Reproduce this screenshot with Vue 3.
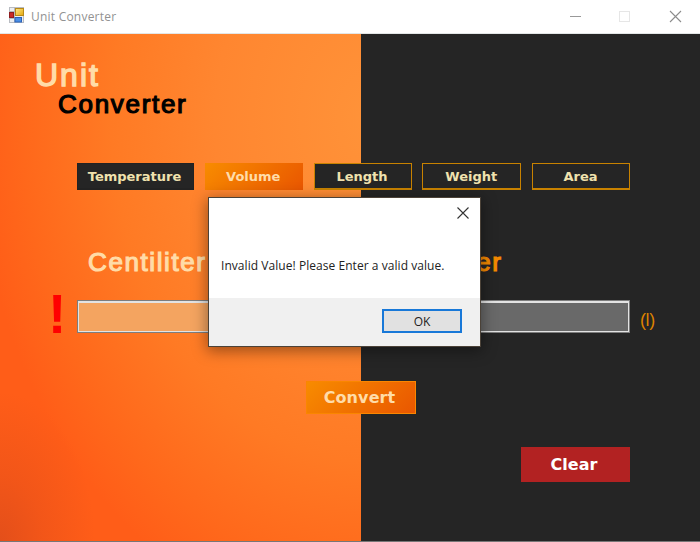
<script setup>
import { ref } from 'vue'

const tabs = ['Temperature', 'Volume', 'Length', 'Weight', 'Area']
const active = ref('Volume')
const from = ref('')
const to = ref('')
const invalid = ref(true)
const dialogOpen = ref(true)

function convert() {
  const value = parseFloat(from.value)
  invalid.value = Number.isNaN(value)
  dialogOpen.value = invalid.value
  if (!invalid.value) to.value = String(value / 100)
}

function clear() {
  from.value = ''
  to.value = ''
  invalid.value = false
}
</script>

<template>
  <div class="window">
    <header class="titlebar">
      <svg class="app-icon" width="16" height="17" viewBox="0 0 16 17">
        <defs>
          <linearGradient id="gold" x1="0" y1="0" x2="1" y2="1">
            <stop offset="0" stop-color="#ffe98a" />
            <stop offset="1" stop-color="#e3a70c" />
          </linearGradient>
        </defs>
        <rect x="0.500" y="0.500" width="14" height="15" fill="#eceef1" stroke="#b9bcc2" />
        <path d="M0.500 4.500H5M5.500 0.500V16M0.500 11.500H6" stroke="#b4b7be" fill="none" />
        <rect x="6.500" y="1.500" width="8" height="7" fill="url(#gold)" stroke="#b98a17" />
        <rect x="0.500" y="5.500" width="4" height="5" fill="#c92a27" stroke="#8f1d1f" />
        <rect x="6" y="10.500" width="6.500" height="4.500" fill="#4a8fe6" stroke="#2c62b8" />
      </svg>
      <span class="caption">Unit Converter</span>
      <svg class="controls" width="114" height="14" viewBox="0 0 114 14">
        <path d="M1 7.500H12" stroke="#999" />
        <rect x="50.500" y="2.500" width="10" height="10" fill="none" stroke="#e6e6e6" />
        <path d="M101 2L112 13M112 2L101 13" stroke="#8c8c8c" stroke-width="1.100" />
      </svg>
    </header>

    <main class="form">
      <h1 class="brand">
        <span class="brand-unit">Unit</span>
        <span class="brand-converter">Converter</span>
      </h1>

      <nav class="tabs">
        <button
          v-for="tab in tabs"
          :key="tab"
          class="tab"
          :class="{ active: tab === active, first: tab === 'Temperature' }"
          @click="active = tab"
        >{{ tab }}</button>
      </nav>

      <div class="labels">
        <span class="label-from">Centiliter</span>
        <span class="label-to">Liter</span>
      </div>

      <div class="fields">
        <span class="warning"><span v-if="invalid">!</span></span>
        <input v-model="from" class="field field-from" />
        <input v-model="to" class="field field-to" readonly />
        <span class="symbol">(l)</span>
      </div>

      <button class="convert" @click="convert">Convert</button>
      <button class="clear" @click="clear">Clear</button>
    </main>

    <section v-if="dialogOpen" class="dialog">
      <div class="dialog-body">
        <svg class="dialog-close" width="12" height="12" viewBox="0 0 12 12" @click="dialogOpen = false">
          <path d="M0.500 0.500L11.500 11.500M11.500 0.500L0.500 11.500" stroke="#333" stroke-width="1.100" />
        </svg>
        <p class="message">Invalid Value! Please Enter a valid value.</p>
      </div>
      <footer class="dialog-footer">
        <button class="ok" @click="dialogOpen = false">OK</button>
      </footer>
    </section>
  </div>
</template>

<style>
body {
  margin: 0;
  overflow: hidden;
}
</style>

<style scoped>
.window {
  position: relative;
  box-sizing: border-box;
  width: 700px;
  height: 542px;
  display: flex;
  flex-direction: column;
  background: #fff;
  overflow: hidden;
}
button,
input {
  box-sizing: border-box;
  margin: 0;
  padding: 0;
  border-radius: 0;
  outline: none;
}
.titlebar {
  box-sizing: border-box;
  height: 34px;
  flex: none;
  display: flex;
  align-items: center;
  padding: 0 17px 2px 9px;
  border-bottom: 1px solid #e3e6e6;
}
.app-icon {
  flex: none;
}
.caption {
  margin-left: 6px;
  padding-top: 2px;
  font: 12px/16px "Open Sans", sans-serif;
  letter-spacing: 0.22px;
  color: #929292;
}
.controls {
  margin-left: auto;
}
.form {
  box-sizing: border-box;
  height: 508px;
  display: flex;
  flex-direction: column;
  padding: 24px 0 0;
  border-bottom: 1px solid #777;
  background:
    linear-gradient(#252525, #252525) 361px 0 / 339px 100% no-repeat,
    radial-gradient(ellipse 95px 150px at 0 508px, rgba(226, 78, 26, 0.95), rgba(234, 81, 25, 0.6) 45%, rgba(250, 90, 24, 0) 100%),
    radial-gradient(ellipse 400px 520px at 375px 85px, #ff9339 0, #ff8630 40%, #ff7a24 66%, #ff681b 88%, #ff5d18 100%);
}
.brand {
  display: flex;
  flex-direction: column;
  height: 105px;
  margin: 0;
  font-family: "Liberation Sans", sans-serif;
  font-weight: 400;
}
.brand-unit {
  margin-left: 35px;
  height: 34px;
  font-size: 32px;
  line-height: 34px;
  letter-spacing: 2px;
  color: #ffdca8;
  -webkit-text-stroke: 1.4px #ffdca8;
}
.brand-converter {
  margin-left: 58px;
  font-size: 26px;
  line-height: 24px;
  letter-spacing: 1.7px;
  color: #000;
  -webkit-text-stroke: 1.2px #000;
}
.tabs {
  display: grid;
  grid-template-columns: 117px 98px 98px 99px 98px;
  column-gap: 10.75px;
  height: 26px;
  margin-left: 77px;
}
.tab {
  border: 1px solid #c88200;
  border-bottom-width: 2px;
  background: #252525;
  color: #f0e2ae;
  font: 700 13px/22px "DejaVu Sans", sans-serif;
  padding: 2px 1px 0 0;
}
.tab.first {
  border-color: #222;
  padding-right: 2px;
}
.tab.active {
  border-color: transparent;
  background: linear-gradient(135deg, #f88c00, #e95600) border-box;
  color: #ffdca8;
}
.labels {
  display: flex;
  height: 32px;
  margin-top: 57px;
  padding-left: 88px;
  font: 400 26px/32px "Liberation Sans", sans-serif;
  letter-spacing: 1.6px;
}
.label-from {
  width: 356px;
  color: #ffdca8;
  -webkit-text-stroke: 1.2px #ffdca8;
}
.label-to {
  color: #f58a00;
  -webkit-text-stroke: 1.2px #f58a00;
}
.fields {
  display: grid;
  grid-template-columns: 77px 195px 168px 190px auto;
  grid-template-rows: 33px;
  align-items: center;
  height: 33px;
  margin-top: 22px;
}
.warning {
  padding: 0 0 4px 48px;
  font: 700 55px/33px "Liberation Sans", sans-serif;
  color: #f00;
}
.field {
  height: 33px;
  border: 1px solid #7d7d7d;
  box-shadow: inset 0 0 0 1px #e3e3e3, inset 0 2px 0 #e3e3e3;
  padding: 2px 4px;
  font: 18px "Liberation Sans", sans-serif;
}
.field-from {
  background: #f4a460;
}
.field-to {
  grid-column: 4;
  background: #696969;
  color: #fff;
}
.symbol {
  margin-left: 10px;
  padding-top: 6px;
  font: 18px/22px "Liberation Sans", sans-serif;
  letter-spacing: -0.4px;
  color: #dc8200;
}
.convert {
  width: 110px;
  height: 33px;
  flex: none;
  margin: 48px 0 0 306px;
  padding: 1px 3px 0 0;
  border: 1px solid #fa8600;
  background: linear-gradient(135deg, #f88c00, #e95600) border-box;
  color: #ffdca8;
  font: 700 16px/30px "DejaVu Sans", sans-serif;
  letter-spacing: 0.1px;
}
.clear {
  width: 109px;
  height: 35px;
  flex: none;
  margin: 33px 0 0 521px;
  padding: 1px 3px 0 0;
  border: 0;
  background: #b22222;
  color: #fff;
  font: 700 16px/34px "DejaVu Sans", sans-serif;
}
.dialog {
  position: absolute;
  left: 208px;
  top: 197px;
  box-sizing: border-box;
  width: 273px;
  height: 150px;
  display: flex;
  flex-direction: column;
  border: 1px solid #4b4238;
  background: #fff;
  box-shadow: 0 3px 14px 1px rgba(0, 0, 0, 0.4);
}
.dialog-body {
  height: 100px;
  display: flex;
  flex-direction: column;
}
.dialog-close {
  margin: 9px 11px 0 auto;
}
.message {
  margin: 38px 0 0 12px;
  font: 12px/18px "Open Sans", sans-serif;
  letter-spacing: 0.05px;
  color: #222;
  white-space: nowrap;
}
.dialog-footer {
  flex: 1;
  display: flex;
  justify-content: flex-end;
  align-items: flex-start;
  padding: 11px 18px 0 0;
  background: #f0f0f0;
}
.ok {
  width: 80px;
  height: 24px;
  border: 2px solid #1878d8;
  background: #e1e1e1;
  color: #222;
  font: 12px/20px "Open Sans", sans-serif;
  padding-top: 1px;
}
</style>
